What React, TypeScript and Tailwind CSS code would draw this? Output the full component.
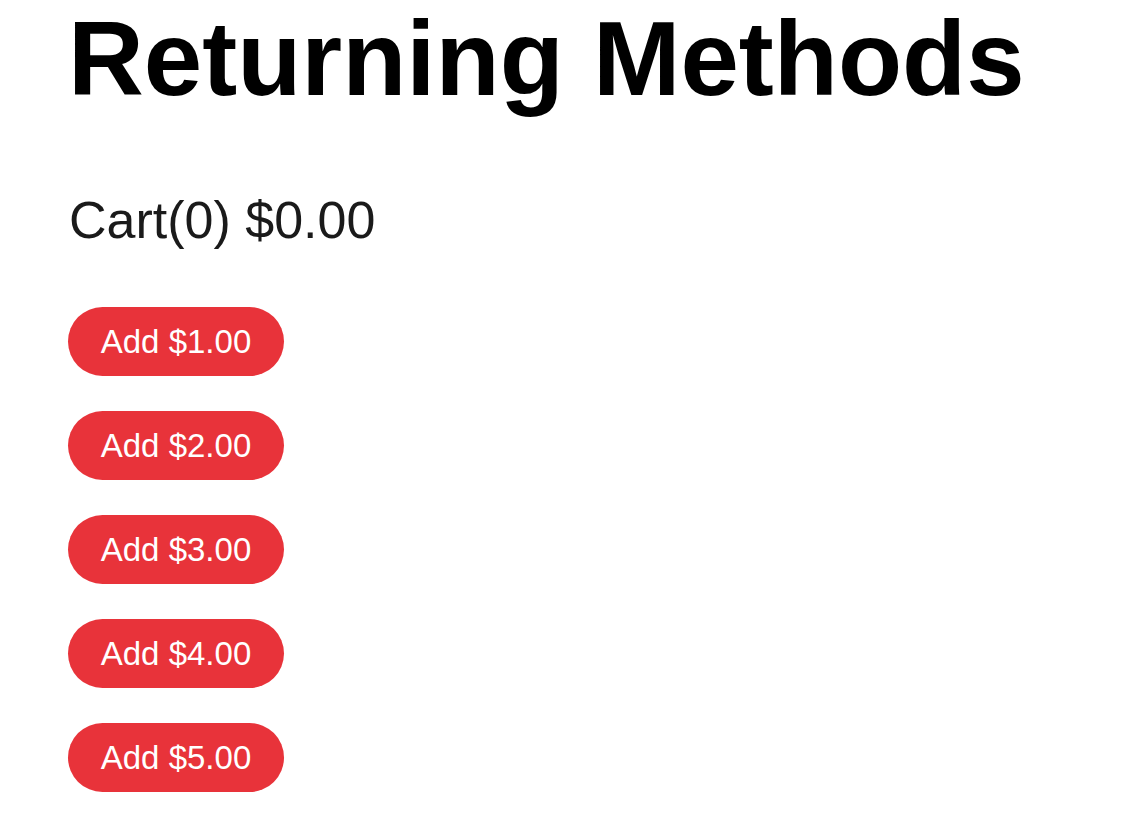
const amounts = [1, 2, 3, 4, 5];

export default function App() {
  return (
    <div className="min-h-[825px] bg-white pl-[68px] font-['Liberation_Sans',Arial,sans-serif]">
      {/* title */}
      <h1 className="pt-[6px] text-[105px] font-bold leading-[105px] text-black">Returning Methods</h1>

      {/* cart */}
      <p className="mt-[84px] pl-[1px] text-[52px] leading-[50px] text-[#1a1a1a]">Cart(0) $0.00</p>

      {/* buttons */}
      <div className="mt-[62px] flex flex-col items-start gap-[35px]">
        {amounts.map((a) => (
          <button
            key={a}
            className="flex h-[69px] w-[216px] items-center justify-center rounded-full bg-[#e8333a] text-[33px] text-white"
          >
            Add ${a}.00
          </button>
        ))}
      </div>
    </div>
  );
}
